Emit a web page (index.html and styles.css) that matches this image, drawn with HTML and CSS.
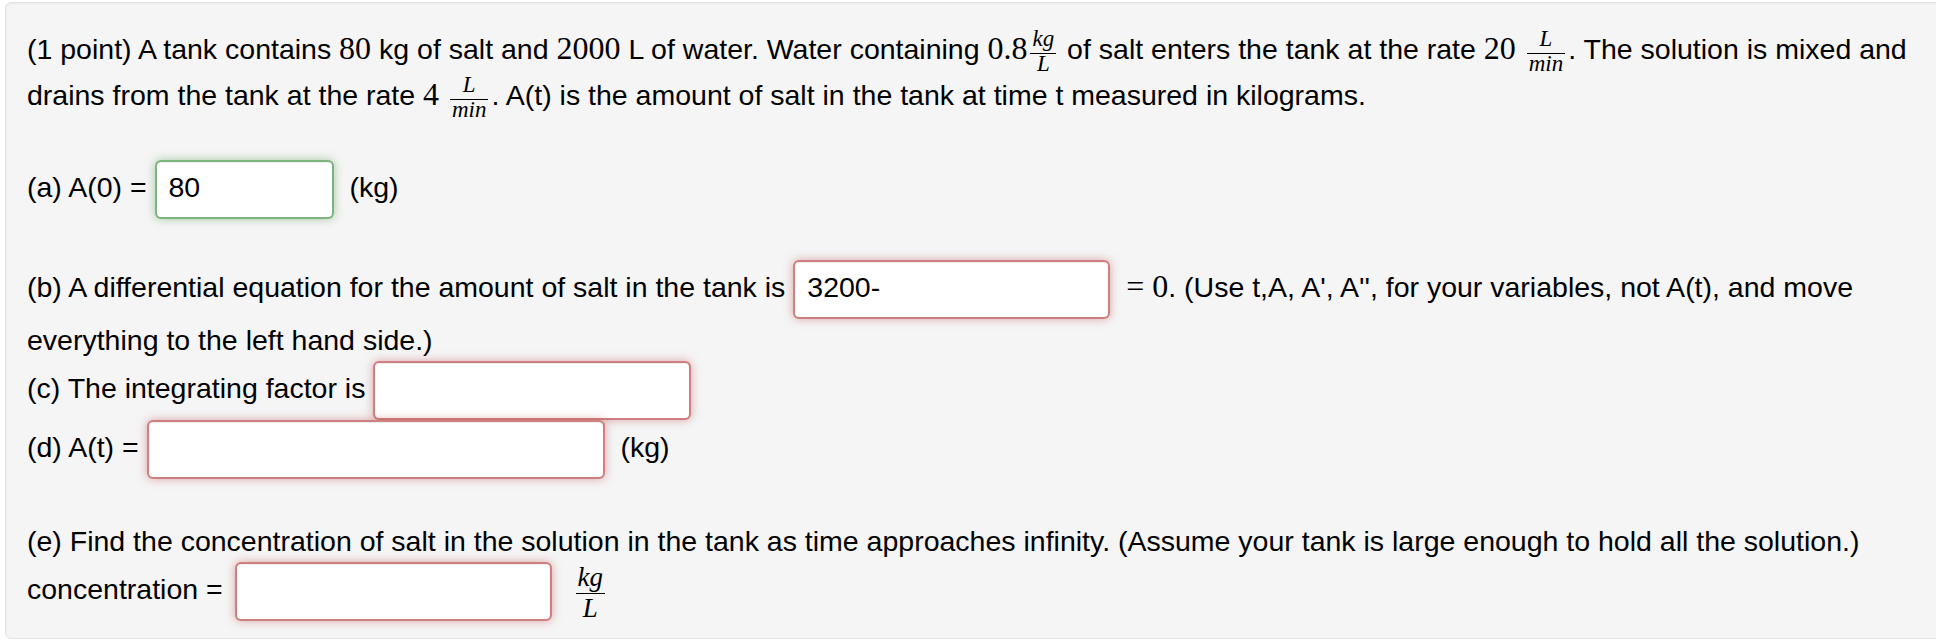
FILE: index.html
```html
<!DOCTYPE html>
<html>
<head>
<meta charset="utf-8">
<link rel="stylesheet" href="styles.css">
</head>
<body>
<div class="well">
  <p class="intro">(1 point) A tank contains <span class="m">80</span> kg of salt and <span class="m">2000</span> L of water. Water containing <span class="m">0.8</span><span class="frac"><span class="num">kg</span><span class="den">L</span></span> of salt enters the tank at the rate <span class="m">20</span> <span class="frac"><span class="num">L</span><span class="den">min</span></span>. The solution is mixed and<br>drains from the tank at the rate <span class="m">4</span> <span class="frac"><span class="num">L</span><span class="den">min</span></span>. A(t) is the amount of salt in the tank at time t measured in kilograms.</p>
  <div class="row row-a">(a) A(0) = <input class="ans correct w-a" type="text" value="80"> (kg)</div>
  <div class="row row-b">(b) A differential equation for the amount of salt in the tank is <input class="ans incorrect w-b" type="text" value="3200-"> <span class="m">= 0</span>. (Use t,A, A', A'', for your variables, not A(t), and move</div>
  <div class="line">everything to the left hand side.)</div>
  <div class="row">(c) The integrating factor is <input class="ans incorrect w-c" type="text" value=""></div>
  <div class="row">(d) A(t) = <input class="ans incorrect w-d" type="text" value=""> (kg)</div>
  <div class="line line-e">(e) Find the concentration of salt in the solution in the tank as time approaches infinity. (Assume your tank is large enough to hold all the solution.)</div>
  <div class="row">concentration = <input class="ans incorrect w-e" type="text" value=""> <span class="frac frac-big"><span class="num">kg</span><span class="den">L</span></span></div>
</div>
</body>
</html>
```

FILE: styles.css
```css
html {
  overflow: hidden;
  background: #ffffff;
}
body {
  margin: 0;
  font-family: "Liberation Sans", Arial, Helvetica, sans-serif;
  font-size: 28.5px;
  color: #000;
}
.well {
  margin: 2px 0 0 5px;
  width: 2000px;
  box-sizing: border-box;
  background: #f5f5f5;
  border: 1px solid #e3e3e3;
  border-radius: 6px;
  box-shadow: inset 0 1px 2px rgba(0, 0, 0, 0.05);
  padding: 23px 21px 17px 21px;
}
.intro {
  margin: 0;
  line-height: 46px;
  white-space: nowrap;
}
.m {
  font-family: "Liberation Serif", "Times New Roman", serif;
  font-size: 32px;
  line-height: 1;
}
.frac {
  display: inline-flex;
  flex-direction: column;
  align-items: center;
  vertical-align: 13px;
  font-family: "Liberation Serif", "Times New Roman", serif;
  font-style: italic;
  font-size: 23px;
  margin: -4px 3px;
}
.frac .num {
  line-height: 22px;
  padding: 0 2px 3px;
  border-bottom: 1.5px solid #000;
  align-self: stretch;
  text-align: center;
}
.frac .den {
  line-height: 18px;
  padding: 1px 2px 0;
}
.frac-big {
  font-size: 27px;
  vertical-align: 13px;
  margin-left: 8px;
}
.frac-big .num {
  line-height: 26px;
  padding-bottom: 3px;
}
.frac-big .den {
  line-height: 24px;
  padding-top: 2px;
}
.row {
  line-height: 32px;
  white-space: nowrap;
}
.row-a {
  margin-top: 42px;
}
.row-b {
  margin-top: 41px;
}
.line {
  line-height: 42px;
  white-space: nowrap;
}
.line-e {
  margin-top: 41px;
}
.ans {
  box-sizing: border-box;
  height: 59px;
  margin: 0 8px 0 0;
  padding: 6px 12px 10px 12px;
  font-family: "Liberation Sans", Arial, Helvetica, sans-serif;
  font-size: 28.5px;
  line-height: 39px;
  color: #000;
  background: #fff;
  border-radius: 6px;
  border: 2px solid #ccc;
  vertical-align: baseline;
  outline: none;
}
.correct {
  border-color: rgba(81, 153, 81, 0.75);
  box-shadow: inset 0 1px 1px rgba(0, 0, 0, 0.075), 0 0 10px rgba(81, 153, 81, 0.5);
}
.incorrect {
  border-color: rgba(191, 84, 84, 0.75);
  box-shadow: inset 0 1px 1px rgba(0, 0, 0, 0.075), 0 0 10px rgba(191, 84, 84, 0.5);
}
.w-a { width: 179px; }
.w-b { width: 317px; }
.w-c { width: 318px; }
.w-d { width: 458px; }
.w-e { width: 317px; margin-left: 4px; }
```
